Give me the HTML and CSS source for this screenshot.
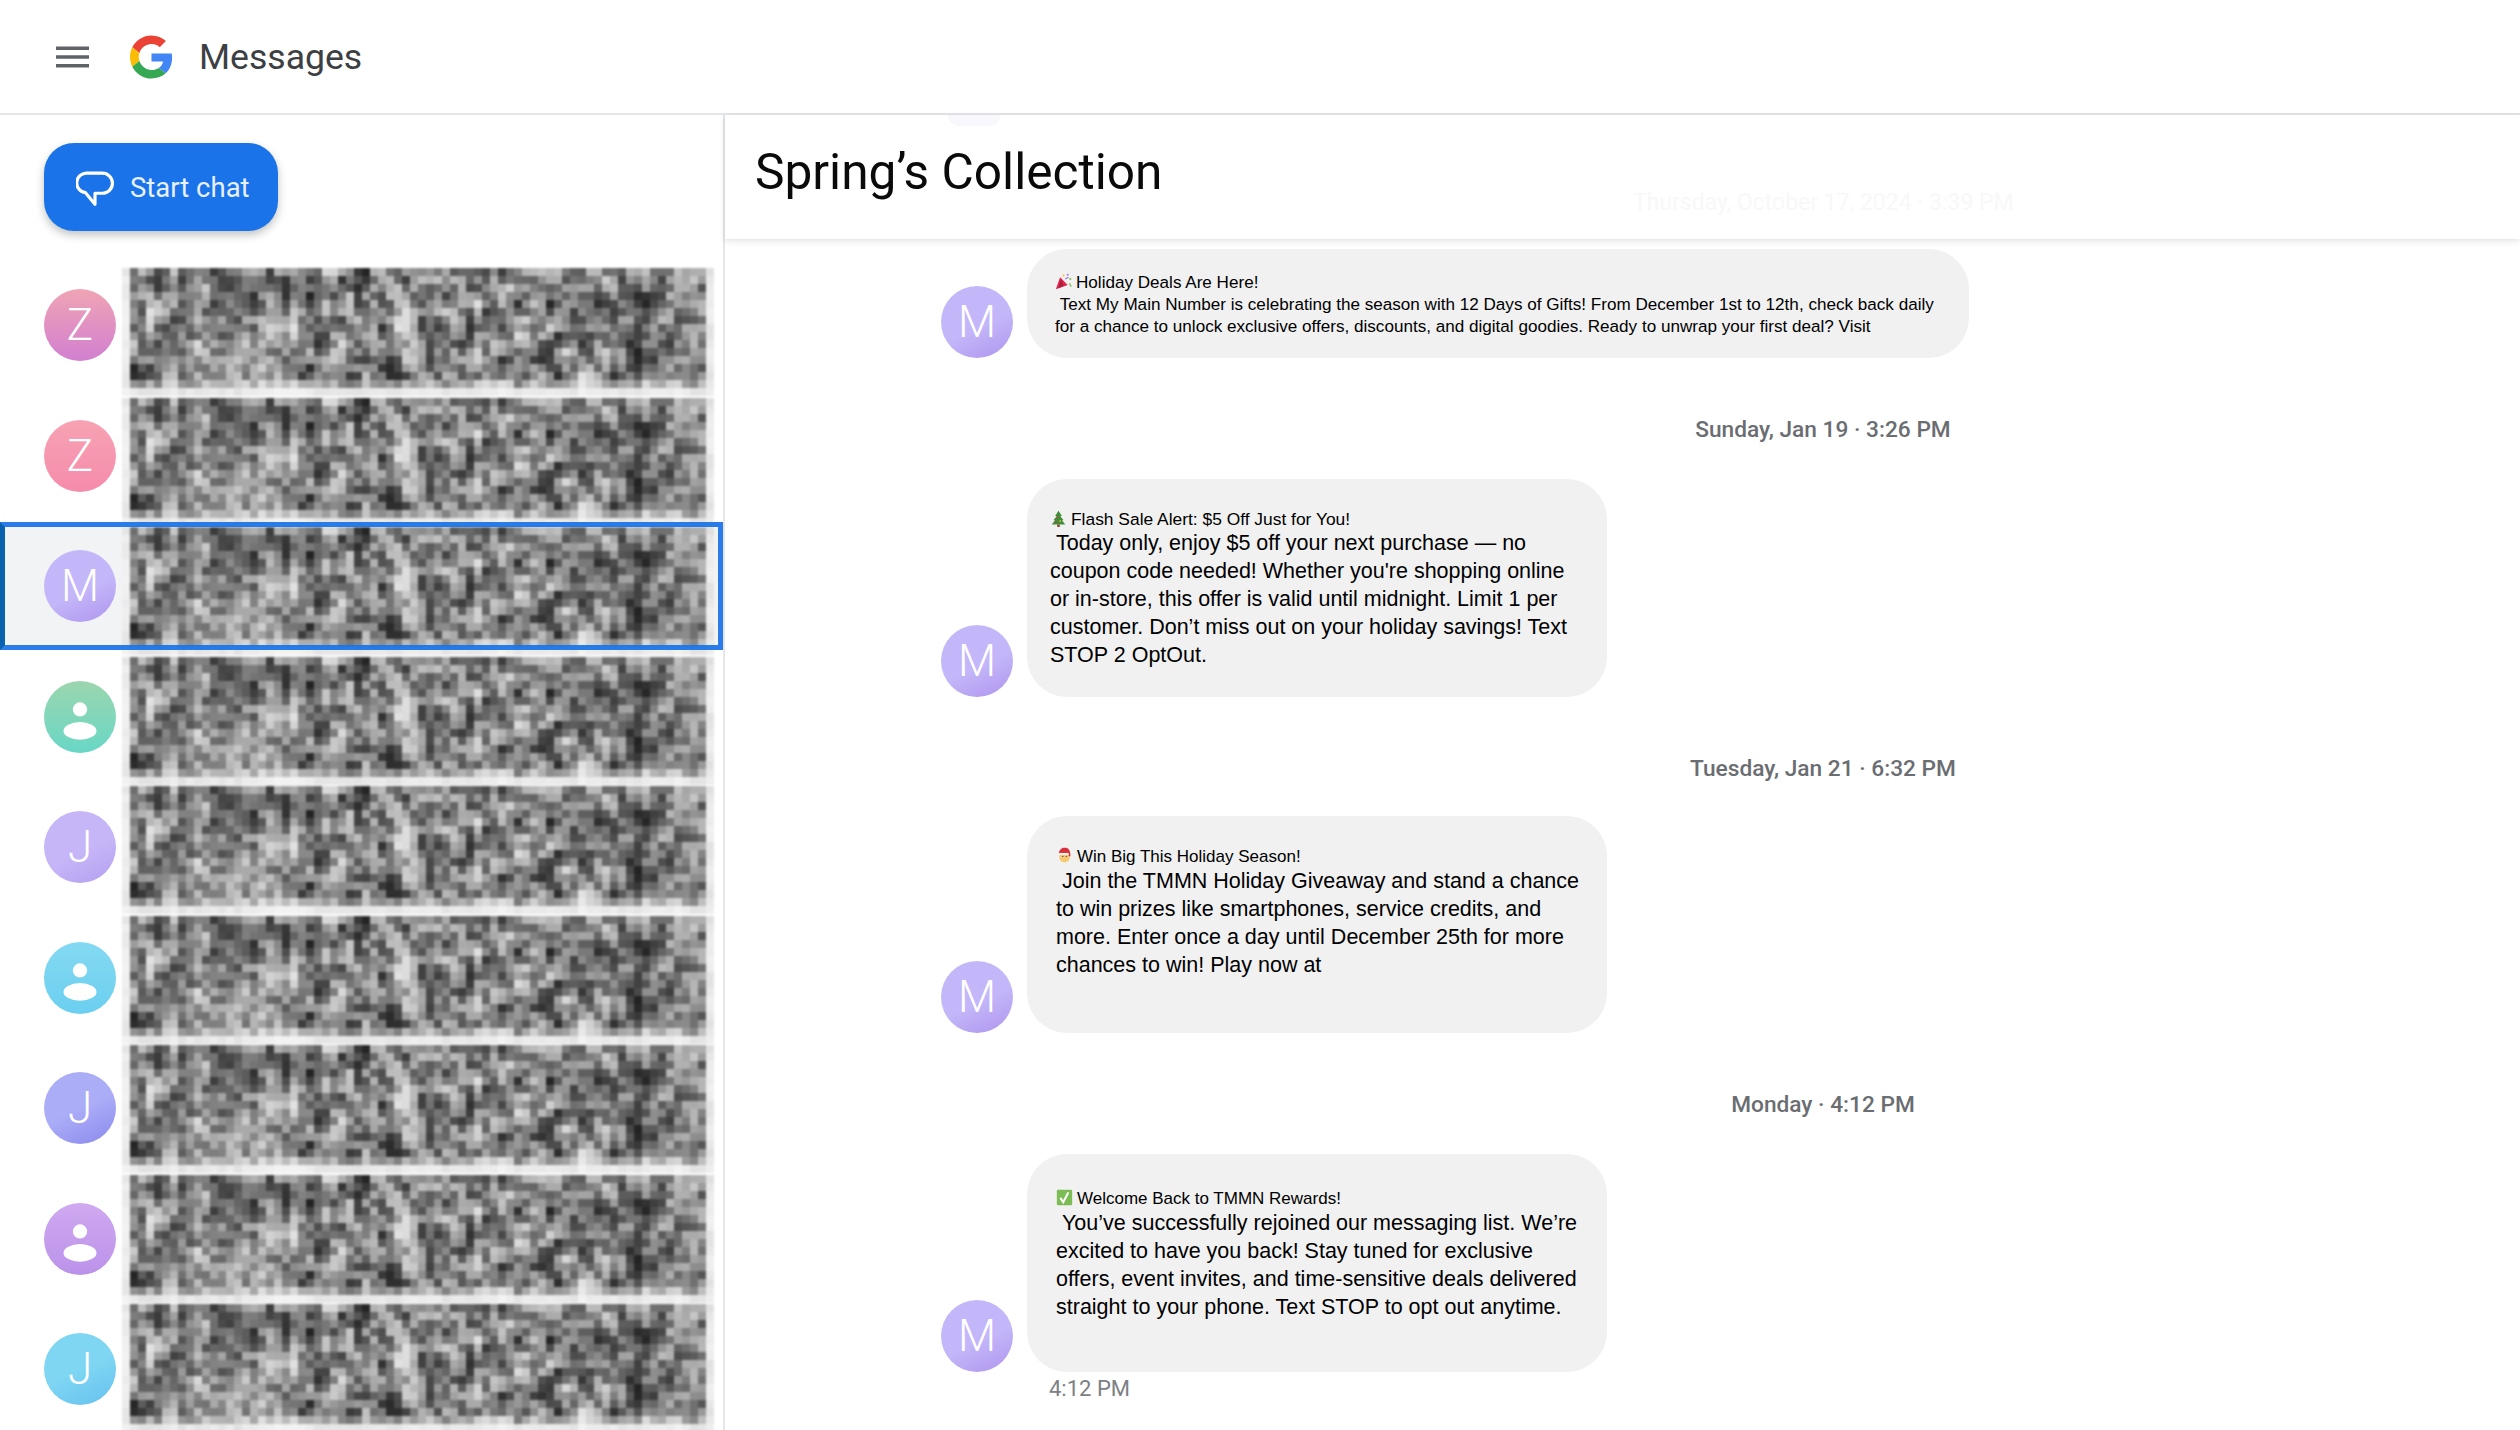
FILE: index.html
```html
<!DOCTYPE html>
<html lang="en">
<head>
<meta charset="utf-8">
<title>Messages</title>
<link rel="stylesheet" href="styles.css">
</head>
<body>
<header class="topbar">
  <svg class="menu-icon" viewBox="0 0 34 24"><path d="M0 3h34M0 12h34M0 21h34"/></svg>
  <svg class="g-logo" viewBox="0 0 48 48">
    <path fill="#EA4335" d="M24 9.5c3.54 0 6.71 1.22 9.21 3.6l6.85-6.85C35.9 2.38 30.47 0 24 0 14.62 0 6.51 5.38 2.56 13.22l7.98 6.19C12.43 13.72 17.74 9.5 24 9.5z"/>
    <path fill="#4285F4" d="M46.98 24.55c0-1.57-.15-3.09-.38-4.55H24v9.02h12.94c-.58 2.96-2.26 5.48-4.78 7.18l7.73 6c4.51-4.18 7.09-10.36 7.09-17.65z"/>
    <path fill="#FBBC05" d="M10.53 28.59c-.48-1.45-.76-2.99-.76-4.59s.27-3.14.76-4.59l-7.98-6.19C.92 16.46 0 20.12 0 24c0 3.88.92 7.54 2.56 10.78l7.97-6.19z"/>
    <path fill="#34A853" d="M24 48c6.48 0 11.93-2.13 15.89-5.81l-7.73-6c-2.15 1.45-4.92 2.3-8.16 2.3-6.26 0-11.57-4.22-13.47-9.91l-7.98 6.19C6.51 42.62 14.62 48 24 48z"/>
  </svg>
  <span class="app-name">Messages</span>
</header>
<div class="app">
  <aside class="sidebar">
    <button class="start-chat">
      <svg class="chat-icon" viewBox="0 0 36 36"><path d="M11 3h14a9 9 0 0 1 0 19h-7v10.500L9 21.500A9.300 9.300 0 0 1 11 3z"/></svg>
      <span>Start chat</span>
    </button>
    <div class="list">
      <div class="selected"></div>
      <div class="avatars">
        <div class="avatar av-pink">Z</div>
        <div class="avatar av-rose">Z</div>
        <div class="avatar av-violet">M</div>
        <div class="avatar av-green"><svg class="person" viewBox="0 0 40 40"><circle cx="20" cy="9.500" r="6.500"/><ellipse cx="20" cy="29" rx="15" ry="8"/></svg></div>
        <div class="avatar av-lav">J</div>
        <div class="avatar av-cyan"><svg class="person" viewBox="0 0 40 40"><circle cx="20" cy="9.500" r="6.500"/><ellipse cx="20" cy="29" rx="15" ry="8"/></svg></div>
        <div class="avatar av-indigo">J</div>
        <div class="avatar av-purple"><svg class="person" viewBox="0 0 40 40"><circle cx="20" cy="9.500" r="6.500"/><ellipse cx="20" cy="29" rx="15" ry="8"/></svg></div>
        <div class="avatar av-sky">J</div>
      </div>
      <div class="mosaics">
        <canvas class="mosaic" width="592" height="128"></canvas>
        <canvas class="mosaic" width="592" height="128"></canvas>
        <canvas class="mosaic" width="592" height="128"></canvas>
        <canvas class="mosaic" width="592" height="128"></canvas>
        <canvas class="mosaic" width="592" height="128"></canvas>
        <canvas class="mosaic" width="592" height="128"></canvas>
        <canvas class="mosaic" width="592" height="128"></canvas>
        <canvas class="mosaic" width="592" height="128"></canvas>
        <canvas class="mosaic" width="592" height="128"></canvas>
      </div>
    </div>
  </aside>
  <main class="conversation">
    <div class="title-bar">
      <div class="ghost-dot"></div>
      <h1 class="title">Spring’s Collection</h1>
      <div class="ghost-stamp">Thursday, October 17, 2024 · 3:39 PM</div>
    </div>
    <div class="thread">
      <div class="msg">
        <div class="avatar av-violet">M</div>
        <div class="bubble bubble-wide">
          <svg class="emoji" viewBox="0 0 20 20"><path fill="#e0244a" d="M1 19 6 5l9 9z"/><path fill="#ab1e3c" d="M4 18 7 7l3 8z"/><circle cx="10" cy="3" r="1.200" fill="#f5c33b"/><circle cx="15" cy="2" r="1.200" fill="#9b7be0"/><circle cx="18" cy="7" r="1.200" fill="#7cc04b"/><path stroke="#7cc04b" stroke-width="1.500" d="M17 12l2 4"/><path stroke="#9b7be0" stroke-width="1.500" d="M12 7l4-2"/></svg>Holiday Deals Are Here!<br>
          &nbsp;Text My Main Number is celebrating the season with 12 Days of Gifts! From December 1st to 12th, check back daily<br>
          for a chance to unlock exclusive offers, discounts, and digital goodies. Ready to unwrap your first deal? Visit
        </div>
      </div>
      <div class="stamp">Sunday, Jan 19 · 3:26 PM</div>
      <div class="msg">
        <div class="avatar av-violet">M</div>
        <div class="bubble bubble-tree">
          <div class="lead lead-wide"><svg class="emoji" viewBox="0 0 20 20"><path fill="#3f8f3a" d="M10 1l4 6h-2l4 5h-2l4 5H2l4-5H4l4-5H6z"/><path fill="#7b4a22" d="M8.500 17h3v3h-3z"/><circle cx="9" cy="8" r="1" fill="#e0304a"/><circle cx="12" cy="13" r="1" fill="#f5c33b"/><circle cx="7" cy="14" r="1" fill="#e0304a"/></svg>Flash Sale Alert: $5 Off Just for You!</div>
          &nbsp;Today only, enjoy $5 off your next purchase — no<br>
          coupon code needed! Whether you're shopping online<br>
          or in-store, this offer is valid until midnight. Limit 1 per<br>
          customer. Don’t miss out on your holiday savings! Text<br>
          STOP 2 OptOut.
        </div>
      </div>
      <div class="stamp stamp-tight">Tuesday, Jan 21 · 6:32 PM</div>
      <div class="msg">
        <div class="avatar av-violet">M</div>
        <div class="bubble bubble-santa">
          <div class="lead"><svg class="emoji" viewBox="0 0 20 20"><path fill="#f3f0ea" d="M3 10h14v4a7 6 0 0 1-14 0z"/><path fill="#f7c873" d="M4 7h12v6a6 5 0 0 1-12 0z"/><path fill="#d8303a" d="M3 8C4 2 8 0 12 1c4 1 5 5 5 10h-2c0-2-1-3-2-3z"/><path fill="#f3f0ea" d="M2 7h13v2.500H2z"/><circle cx="8" cy="11" r=".8" fill="#4a3020"/><circle cx="12" cy="11" r=".8" fill="#4a3020"/></svg>Win Big This Holiday Season!</div>
          &nbsp;Join the TMMN Holiday Giveaway and stand a chance<br>
          to win prizes like smartphones, service credits, and<br>
          more. Enter once a day until December 25th for more<br>
          chances to win! Play now at
        </div>
      </div>
      <div class="stamp">Monday · 4:12 PM</div>
      <div class="msg">
        <div class="avatar av-violet">M</div>
        <div class="bubble bubble-check">
          <div class="lead"><svg class="emoji" viewBox="0 0 20 20"><rect x="1" y="1" width="18" height="18" rx="1.500" fill="#7cbc55"/><path fill="none" stroke="#fff" stroke-width="2.400" d="M5 10.500l3.500 5L14.500 4"/></svg>Welcome Back to TMMN Rewards!</div>
          &nbsp;You’ve successfully rejoined our messaging list. We’re<br>
          excited to have you back! Stay tuned for exclusive<br>
          offers, event invites, and time-sensitive deals delivered<br>
          straight to your phone. Text STOP to opt out anytime.
        </div>
      </div>
      <div class="msg-time">4:12 PM</div>
    </div>
  </main>
</div>
<script src="script.js"></script>
</body>
</html>
```
FILE: styles.css
```css
* { box-sizing: border-box; }
html, body { margin: 0; height: 100%; overflow: hidden; background: #fff; }
body { font-family: Roboto, "Liberation Sans", sans-serif; color: #000; }

.topbar { height: 115px; display: flex; align-items: center; padding-left: 56px; border-bottom: 2px solid #e3e5e9; }
.menu-icon { width: 33px; height: 24px; fill: none; stroke: #5f6368; stroke-width: 3.5; }
.g-logo { width: 43px; height: 44px; margin-left: 41px; }
.app-name { margin-left: 26px; font-size: 35.6px; color: #3c4043; }

.app { display: flex; height: 1315px; }
.sidebar { width: 725px; flex: none; border-right: 2px solid #e4e6ea; }
.start-chat { display: flex; align-items: center; gap: 16px; width: 234px; height: 88px; margin: 28px 0 0 44px; padding: 0 0 0 32px; border: 0; border-radius: 30px; background: #1a73e8; color: #e8f0fd; font: 400 27.5px Roboto, sans-serif; box-shadow: 0 4px 8px rgba(60,64,67,.32); }
.chat-icon { width: 38px; height: 38px; fill: none; stroke: #fff; stroke-width: 3; stroke-linejoin: round; margin-top: 4px; }

.list { position: relative; display: flex; margin-top: 37px; height: 1162px; }
.avatars { position: relative; display: flex; flex-direction: column; gap: 58.5px; width: 122px; flex: none; padding: 21px 0 0 44px; }
.avatar { width: 72px; height: 72px; flex: none; border-radius: 50%; display: flex; align-items: center; justify-content: center; color: #fff; font-size: 44px; font-weight: 300; }
.person { width: 44px; height: 44px; fill: #fff; margin-top: 8px; }
.av-pink { background: linear-gradient(#f0a4b4, #d27fd0); }
.av-rose { background: linear-gradient(#f7a3b3, #f58bab); }
.av-violet { background: linear-gradient(155deg, #c4b7f9 55%, #b39cf0 90%); }
.av-green { background: linear-gradient(#9bd6ae, #68d7c6); }
.av-lav { background: linear-gradient(155deg, #c6b6f7 55%, #b8a4f2 90%); }
.av-cyan { background: linear-gradient(#84d9f2, #6bcff0); }
.av-indigo { background: linear-gradient(155deg, #acadf7 50%, #9090ef 90%); }
.av-purple { background: linear-gradient(#cfa9f0, #bb92ea); }
.av-sky { background: linear-gradient(155deg, #7fd6f3 50%, #6ac5ef 90%); }

.mosaics { position: relative; display: flex; flex-direction: column; gap: 1.500px; }
.mosaic { display: block; width: 592px; height: 128px; filter: blur(1.2px); }
.selected { position: absolute; left: 0; top: 254px; width: 723px; height: 128px; background: #f1f3f5; }
.selected::after { content: ""; position: absolute; inset: 0; z-index: 1; border: 5px solid rgba(26,115,232,.93); border-left-color: #0a62ae; }

.conversation { flex: 1; min-width: 0; position: relative; }
.title-bar { position: relative; z-index: 1; height: 124px; display: flex; align-items: center; padding-left: 30px; background: #fff; box-shadow: 0 2px 6px rgba(0,0,0,.12); }
.title { margin: -10px 0 0; font-size: 49.6px; font-weight: 400; color: #0a0a0a; }
.ghost-dot { position: absolute; left: 223px; top: 0; width: 52px; height: 11px; border-radius: 0 0 26px 26px; background: #f7f7fc; }
.ghost-stamp { position: absolute; left: 908px; top: 74px; font-size: 23px; color: #f8f8f8; white-space: nowrap; }

.thread { display: flex; flex-direction: column; padding: 10px 0 0 216px; }
.msg { display: flex; align-items: flex-end; gap: 14px; }
.bubble { background: #f1f1f1; border-radius: 40px; font-family: "Liberation Sans", Arial, sans-serif; white-space: nowrap; width: 580px; font-size: 21.5px; line-height: 28px; }
.lead { font-size: 17px; line-height: 20px; height: 20px; }
.lead-wide { font-size: 17.4px; }
.bubble-wide { width: 942px; height: 109px; padding: 23px 0 0 28px; font-size: 17.1px; line-height: 22px; }
.bubble-tree { height: 218px; padding: 30px 0 0 23px; }
.bubble-santa { height: 217px; padding: 31px 0 0 29px; }
.bubble-check { height: 218px; padding: 35px 0 0 29px; }
.emoji { width: 17px; height: 17px; margin-right: 4px; vertical-align: -2px; fill: none; }
.stamp { height: 30px; margin: 57px 0 34px; padding-left: 185px; text-align: center; font-size: 22.7px; font-weight: 500; line-height: 30px; color: #6a6d71; }
.stamp-tight { margin-bottom: 32px; }
.msg-time { margin: 3px 0 0 108px; font-size: 22px; line-height: 28px; color: #7d8084; }
```
FILE: script.js
```js
// Draws the pixelated redaction block that covers every conversation row.
var seed = 20241;
function rnd() {
  seed = (seed * 1664525 + 1013904223) >>> 0;
  return seed / 4294967296;
}
var COLS = 74, ROWS = 16, TILE = 8, noise = [], cells = [];
for (var y = 0; y < ROWS + 2; y++) {
  noise.push([]);
  for (var x = 0; x < COLS + 2; x++) noise[y].push(rnd() - 0.5);
}
for (var y = 0; y < ROWS; y++) {
  cells.push([]);
  for (var x = 0; x < COLS; x++) {
    var sharp = noise[y][x];
    var blob = (noise[y][x] + noise[y + 1][x] + noise[y][x + 1] + noise[y + 1][x + 1]) / 4;
    var tall = (noise[y][x] + noise[y + 1][x] + noise[y + 2][x]) / 3;
    var v = 132 + sharp * 70 + blob * 130 + tall * 60;
    cells[y].push(Math.max(35, Math.min(225, v)));
  }
}
document.querySelectorAll('.mosaic').forEach(function (canvas) {
  var ctx = canvas.getContext('2d');
  for (var y = 0; y < ROWS; y++) {
    for (var x = 0; x < COLS; x++) {
      var v = cells[y][x];
      var edge = 0;
      if (x === 0 || x === COLS - 1) edge = 0.88;
      if (y === ROWS - 1) edge = Math.max(edge, 0.88);
      else if (y === ROWS - 2) edge = Math.max(edge, 0.35);
      v = v + (246 - v) * edge;
      var g = Math.round(v);
      ctx.fillStyle = 'rgb(' + g + ',' + g + ',' + g + ')';
      ctx.fillRect(x * TILE, y * TILE, TILE, TILE);
    }
  }
});
```
